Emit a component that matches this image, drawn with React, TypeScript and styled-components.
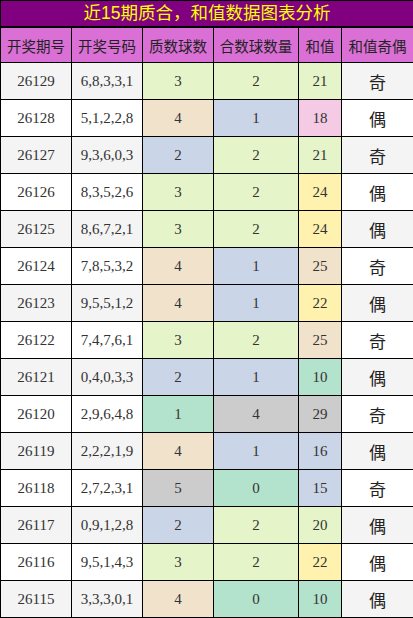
import React from 'react';
import styled, { createGlobalStyle } from 'styled-components';

const GlobalStyle = createGlobalStyle`
  html, body {
    margin: 0;
    padding: 0;
    background: #fff;
  }
`;

const palette: Record<string, string> = {
  g: '#e6f5c9',
  b: '#f1e2cc',
  u: '#cbd5e8',
  p: '#f4cae4',
  y: '#fff2ae',
  m: '#b3e2cd',
  k: '#cccccc',
};

type Row = {
  issue: string;
  nums: string;
  prime: [number, string];
  comp: [number, string];
  sum: [number, string];
  parity: string;
};

const rows: Row[] = [
  { issue: '26129', nums: '6,8,3,3,1', prime: [3, 'g'], comp: [2, 'g'], sum: [21, 'g'], parity: '奇' },
  { issue: '26128', nums: '5,1,2,2,8', prime: [4, 'b'], comp: [1, 'u'], sum: [18, 'p'], parity: '偶' },
  { issue: '26127', nums: '9,3,6,0,3', prime: [2, 'u'], comp: [2, 'g'], sum: [21, 'g'], parity: '奇' },
  { issue: '26126', nums: '8,3,5,2,6', prime: [3, 'g'], comp: [2, 'g'], sum: [24, 'y'], parity: '偶' },
  { issue: '26125', nums: '8,6,7,2,1', prime: [3, 'g'], comp: [2, 'g'], sum: [24, 'y'], parity: '偶' },
  { issue: '26124', nums: '7,8,5,3,2', prime: [4, 'b'], comp: [1, 'u'], sum: [25, 'b'], parity: '奇' },
  { issue: '26123', nums: '9,5,5,1,2', prime: [4, 'b'], comp: [1, 'u'], sum: [22, 'y'], parity: '偶' },
  { issue: '26122', nums: '7,4,7,6,1', prime: [3, 'g'], comp: [2, 'g'], sum: [25, 'b'], parity: '奇' },
  { issue: '26121', nums: '0,4,0,3,3', prime: [2, 'u'], comp: [1, 'u'], sum: [10, 'm'], parity: '偶' },
  { issue: '26120', nums: '2,9,6,4,8', prime: [1, 'm'], comp: [4, 'k'], sum: [29, 'k'], parity: '奇' },
  { issue: '26119', nums: '2,2,2,1,9', prime: [4, 'b'], comp: [1, 'u'], sum: [16, 'u'], parity: '偶' },
  { issue: '26118', nums: '2,7,2,3,1', prime: [5, 'k'], comp: [0, 'm'], sum: [15, 'u'], parity: '奇' },
  { issue: '26117', nums: '0,9,1,2,8', prime: [2, 'u'], comp: [2, 'g'], sum: [20, 'g'], parity: '偶' },
  { issue: '26116', nums: '9,5,1,4,3', prime: [3, 'g'], comp: [2, 'g'], sum: [22, 'y'], parity: '偶' },
  { issue: '26115', nums: '3,3,3,0,1', prime: [4, 'b'], comp: [0, 'm'], sum: [10, 'm'], parity: '偶' },
];

const Table = styled.table`
  width: 413px;
  table-layout: fixed;
  border-collapse: collapse;
  font-family: 'Liberation Serif', 'Noto Sans CJK SC', serif;
`;

const TitleCell = styled.th`
  height: 25px;
  padding: 0;
  background: #800080;
  color: #ffff00;
  font-family: 'Liberation Sans', 'Noto Sans CJK SC', sans-serif;
  font-size: 17.5px;
  font-weight: normal;
  line-height: 25px;
  border: 1px solid #000;
  border-bottom-width: 2px;
`;

const HeadCell = styled.th`
  height: 34px;
  padding: 0;
  background: #da70d6;
  color: #222;
  font-family: 'Noto Sans CJK SC', sans-serif;
  font-size: 14.5px;
  font-weight: normal;
  border: 1px solid #000;
`;

const Cell = styled.td<{ $bg?: string; $zebra?: boolean }>`
  height: 36px;
  padding: 0;
  text-align: center;
  font-size: 15px;
  color: #333;
  border: 1px solid #000;
  background: ${(p) => p.$bg ?? (p.$zebra ? '#f4f4f4' : '#fff')};
`;

const ParityCell = styled(Cell)`
  font-family: 'Noto Sans CJK SC', sans-serif;
  font-size: 17px;
  color: #222;
`;

const widths = [71, 71, 71, 85, 43, 72];
const headers = ['开奖期号', '开奖号码', '质数球数', '合数球数量', '和值', '和值奇偶'];

export default function App() {
  return (
    <>
      <GlobalStyle />
      <Table>
        <colgroup>
          {widths.map((w, i) => (
            <col key={i} style={{ width: w }} />
          ))}
        </colgroup>
        <thead>
          <tr>
            <TitleCell colSpan={6}>近15期质合，和值数据图表分析</TitleCell>
          </tr>
          <tr>
            {headers.map((h) => (
              <HeadCell key={h}>{h}</HeadCell>
            ))}
          </tr>
        </thead>
        <tbody>
          {rows.map((r, i) => {
            const zebra = i % 2 === 0;
            return (
              <tr key={r.issue}>
                <Cell $zebra={zebra}>{r.issue}</Cell>
                <Cell $zebra={zebra}>{r.nums}</Cell>
                <Cell $bg={palette[r.prime[1]]}>{r.prime[0]}</Cell>
                <Cell $bg={palette[r.comp[1]]}>{r.comp[0]}</Cell>
                <Cell $bg={palette[r.sum[1]]}>{r.sum[0]}</Cell>
                <ParityCell $zebra={zebra}>{r.parity}</ParityCell>
              </tr>
            );
          })}
        </tbody>
      </Table>
    </>
  );
}
